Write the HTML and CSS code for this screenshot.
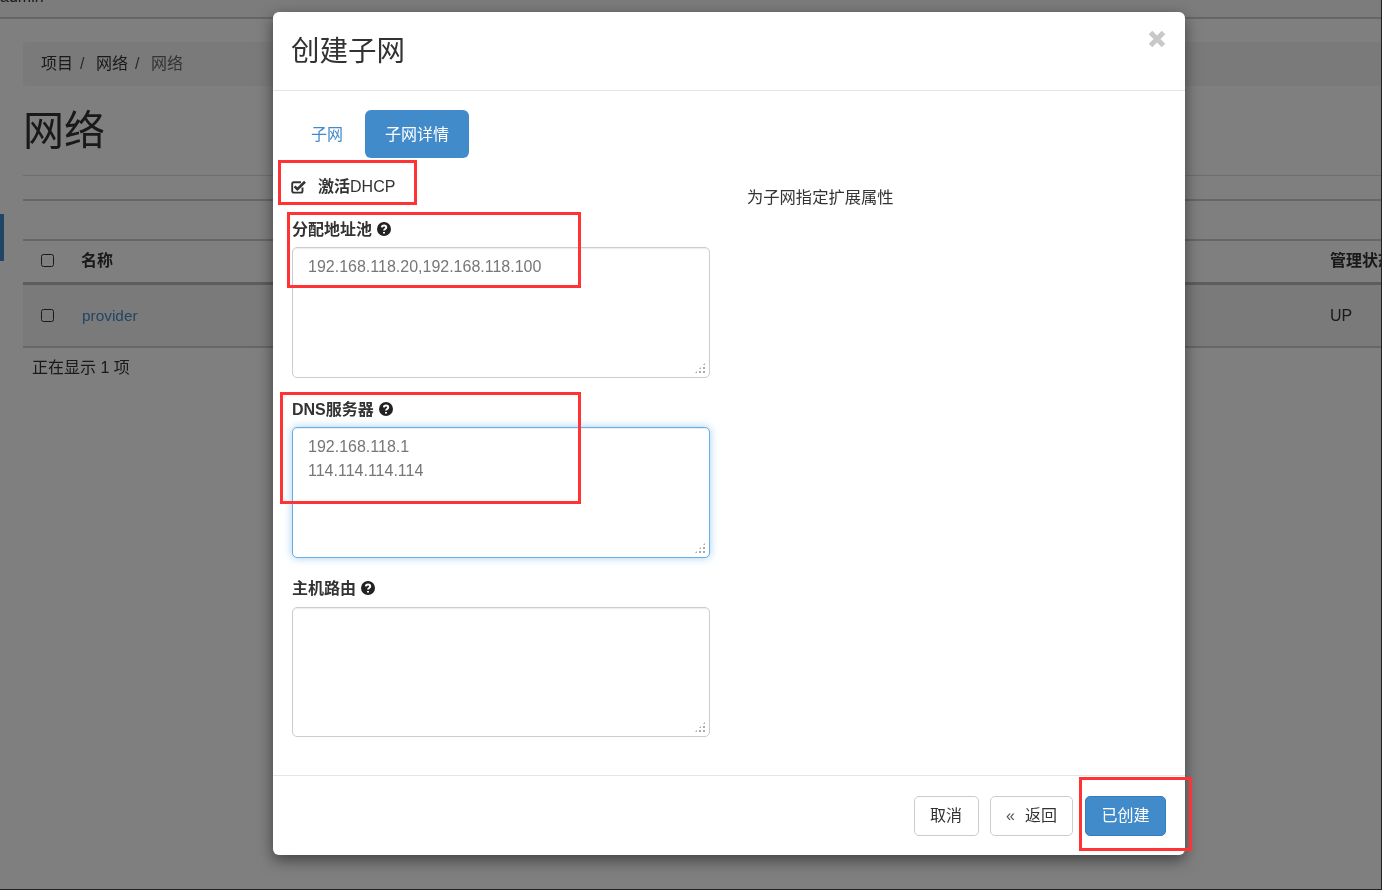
FILE: index.html
```html
<!DOCTYPE html>
<html lang="zh-CN">
<head>
<meta charset="utf-8">
<title>创建子网</title>
<link rel="stylesheet" href="styles.css">
</head>
<body>
<div class="screen">
  <div class="page">
    <div class="topbar"><span class="user">admin</span></div>
    <div class="sideaccent"></div>
    <main class="content">
      <nav class="crumbs"><span>项目</span><i>/</i><span>网络</span><i>/</i><span class="crumb-last">网络</span></nav>
      <h1 class="page-title">网络</h1>
      <div class="toolbar"></div>
      <div class="thead">
        <span class="box"></span><span class="col-name">名称</span><span class="col-status">管理状态</span>
      </div>
      <div class="trow">
        <span class="box"></span><a class="col-name link">provider</a><span class="col-status">UP</span>
      </div>
      <p class="count">正在显示 1 项</p>
    </main>
  </div>
  <div class="backdrop"></div>

  <section class="modal">
    <header class="modal-head">
      <h2 class="modal-title">创建子网</h2>
      <svg class="close" viewBox="0 0 18 18"><path d="M2.5 2.5L15.5 15.5M15.5 2.5L2.5 15.5"/></svg>
    </header>
    <div class="modal-body">
      <div class="tabs">
        <a class="tab">子网</a>
        <a class="tab tab-active">子网详情</a>
      </div>
      <div class="form-grid">
        <div class="form-col">
          <label class="check-row">
            <svg class="check" viewBox="0 0 16 16"><path class="check-box" d="M11.5 8.5V12C11.5 13 10.7 13.6 10 13.6H2.8C2 13.6 1.2 13 1.2 12V4.8C1.2 4 2 3.2 2.8 3.2H10"/><path class="check-tick" d="M3.6 7.4L6.4 10.2L14 2.8"/></svg>
            <span class="check-text"><b>激活</b>DHCP</span>
          </label>
          <div class="field">
            <div class="field-label">分配地址池
              <svg class="help" viewBox="0 0 14 14"><circle cx="7" cy="7" r="7"/><path d="M4.9 5.4C5 3 9.2 3 9.2 5.4C9.2 7 7 6.9 7 8.6M7 10V11.6"/></svg>
            </div>
            <div class="area">192.168.118.20,192.168.118.100<span class="grip"></span></div>
          </div>
          <div class="field">
            <div class="field-label">DNS服务器
              <svg class="help" viewBox="0 0 14 14"><circle cx="7" cy="7" r="7"/><path d="M4.9 5.4C5 3 9.2 3 9.2 5.4C9.2 7 7 6.9 7 8.6M7 10V11.6"/></svg>
            </div>
            <div class="area area-focus">192.168.118.1<br>114.114.114.114<span class="grip"></span></div>
          </div>
          <div class="field field-route">
            <div class="field-label">主机路由
              <svg class="help" viewBox="0 0 14 14"><circle cx="7" cy="7" r="7"/><path d="M4.9 5.4C5 3 9.2 3 9.2 5.4C9.2 7 7 6.9 7 8.6M7 10V11.6"/></svg>
            </div>
            <div class="area area-last"><span class="grip"></span></div>
          </div>
        </div>
        <p class="desc">为子网指定扩展属性</p>
      </div>
    </div>
    <footer class="modal-foot">
      <button class="btn">取消</button>
      <button class="btn btn-back"><span class="laquo">«</span>返回</button>
      <button class="btn btn-primary">已创建</button>
    </footer>
  </section>

  <div class="mark mark-dhcp"></div>
  <div class="mark mark-pool"></div>
  <div class="mark mark-dns"></div>
  <div class="mark mark-create"></div>
</div>
</body>
</html>
```
FILE: styles.css
```css
* { box-sizing: border-box; }
html, body { margin: 0; padding: 0; }
body {
  height: 890px;
  font-family: "Liberation Sans", "Noto Sans CJK SC", sans-serif;
  font-size: 16px;
  line-height: 24px;
  color: #333;
  background: #222;
  overflow: hidden;
}
.screen {
  position: relative;
  width: 1381px;
  height: 889px;
  overflow: hidden;
  background: #fff;
  filter: blur(0.35px);
}

/* background page */
.page { height: 100%; background: #fff; }
.topbar {
  height: 19px;
  background: #f8f8f8;
  border-bottom: 2px solid #ccc;
  overflow: hidden;
}
.user { display: block; margin-top: -15px; }
.sideaccent {
  position: absolute;
  left: 0; top: 214px;
  width: 4px; height: 47px;
  background: #428bca;
}
.content { width: 1359px; margin-left: 23px; }
.crumbs {
  display: flex;
  align-items: center;
  height: 44px;
  margin-top: 23px;
  padding-left: 18px;
  background: #f5f5f5;
  border-radius: 4px;
}
.crumbs i { font-style: normal; margin: 0 11.5px 0 7px; color: #555; }
.crumb-last { color: #666; }
.page-title {
  margin: 0;
  height: 90px;
  padding-top: 18px;
  border-bottom: 1px solid #ddd;
  font-size: 41px;
  line-height: 54px;
  font-weight: 400;
}
.toolbar {
  height: 40px;
  margin-top: 23px;
  border-top: 2px solid #ccc;
}
.thead, .trow {
  display: flex;
  align-items: center;
  padding-left: 18px;
}
.thead {
  height: 46px;
  padding-bottom: 2px;
  border-top: 2px solid #ccc;
  border-bottom: 3px solid #bbb;
  font-weight: 700;
}
.trow {
  height: 63px;
  background: #f5f5f5;
  border-bottom: 2px solid #ccc;
}
.box {
  flex: none;
  width: 13px; height: 13px;
  margin-right: 27px;
  border: 1.5px solid #333;
  border-radius: 2.5px;
}
.col-name { flex: 1; }
.col-status { flex: none; width: 52px; white-space: nowrap; }
.link { padding-left: 1px; color: #428bca; font-size: 15.4px; }
.count { margin: 8px 0 0 9px; }

/* overlay */
.backdrop { position: absolute; inset: 0; background: rgba(0, 0, 0, .5); }

/* modal */
.modal {
  position: absolute;
  left: 273px; top: 12px;
  display: flex;
  flex-direction: column;
  width: 912px; height: 843px;
  background: #fff;
  border-radius: 6px;
  box-shadow: 0 5px 15px rgba(0, 0, 0, .5);
}
.modal-head {
  display: flex;
  justify-content: space-between;
  height: 79px;
  padding: 19px 19px 0 18px;
  border-bottom: 1px solid #e5e5e5;
}
.modal-title { margin: 0; font-size: 28.5px; line-height: 40px; font-weight: 400; }
.close { width: 18px; height: 18px; margin-top: -1px; fill: none; stroke: #c8c8c8; stroke-width: 5; }
.modal-body { flex: 1; padding: 19px 18px 0; }
.tabs { display: flex; gap: 2px; height: 48px; }
.tab {
  display: flex;
  align-items: center;
  padding: 2px 20px 0;
  color: #428bca;
  border-radius: 6px;
}
.tab-active { background: #428bca; color: #fff; }
.form-grid {
  display: grid;
  grid-template-columns: 418px 1fr;
  column-gap: 37px;
  margin-top: 16px;
  padding-left: 1px;
}
.check-row { display: flex; align-items: center; height: 24px; padding-top: 1px; }
.check-text { padding-top: 1px; }
.check-text b { font-weight: 700; }
.check { width: 16px; height: 16px; margin-right: 11px; margin-left: -1px; fill: none; stroke: #333; }
.check-box { stroke-width: 1.9; }
.check-tick { stroke-width: 2.6; }
.field { margin-top: 19px; }
.field-route { margin-top: 18px; }
.field-label { display: flex; align-items: center; gap: 5px; height: 24px; padding-top: 2px; margin-bottom: 6px; font-weight: 700; }
.field-route .field-label { margin-bottom: 7px; }
.help { width: 14px; height: 14px; margin-bottom: 2px; fill: #222; stroke: none; }
.help path { fill: none; stroke: #fff; stroke-width: 2; }
.area {
  position: relative;
  height: 131px;
  padding: 7px 15px;
  background: #fff;
  border: 1px solid #ccc;
  border-radius: 5px;
  color: #777;
  box-shadow: inset 0 1px 1px rgba(0, 0, 0, .075);
}
.area-last { height: 130px; }
.area-focus {
  border-color: #66afe9;
  box-shadow: inset 0 1px 1px rgba(0, 0, 0, .075), 0 0 8px rgba(102, 175, 233, .6);
}
.grip {
  position: absolute;
  right: 3px; bottom: 3px;
  width: 12px; height: 12px;
  background-image: radial-gradient(circle, #aaa 1.1px, transparent 1.4px);
  background-size: 4px 4px;
  clip-path: polygon(100% 0, 100% 100%, 0 100%);
}
.desc { margin: 11px 0 0; font-size: 16.3px; }
.modal-foot {
  display: flex;
  justify-content: flex-end;
  gap: 11px;
  height: 80px;
  padding: 20px 19px 0 0;
  border-top: 1px solid #e5e5e5;
}
.btn {
  height: 40px;
  padding: 0 15.5px;
  background: #fff;
  border: 1px solid #ccc;
  border-radius: 5px;
  color: #333;
  font: inherit;
}
.btn-back { padding: 0 15px 0 15.5px; }
.laquo { margin-right: 10px; color: #555; }
.btn-primary { margin-left: 1px; background: #428bca; border-color: #357ebd; color: #fff; }

/* red annotation frames */
.mark { position: absolute; border: 3px solid #ff3333; }
.mark-dhcp { left: 278px; top: 160px; width: 139px; height: 45px; }
.mark-pool { left: 287px; top: 212px; width: 294px; height: 76px; }
.mark-dns { left: 280px; top: 392px; width: 301px; height: 112px; }
.mark-create { left: 1079px; top: 777px; width: 113px; height: 74px; }
```
